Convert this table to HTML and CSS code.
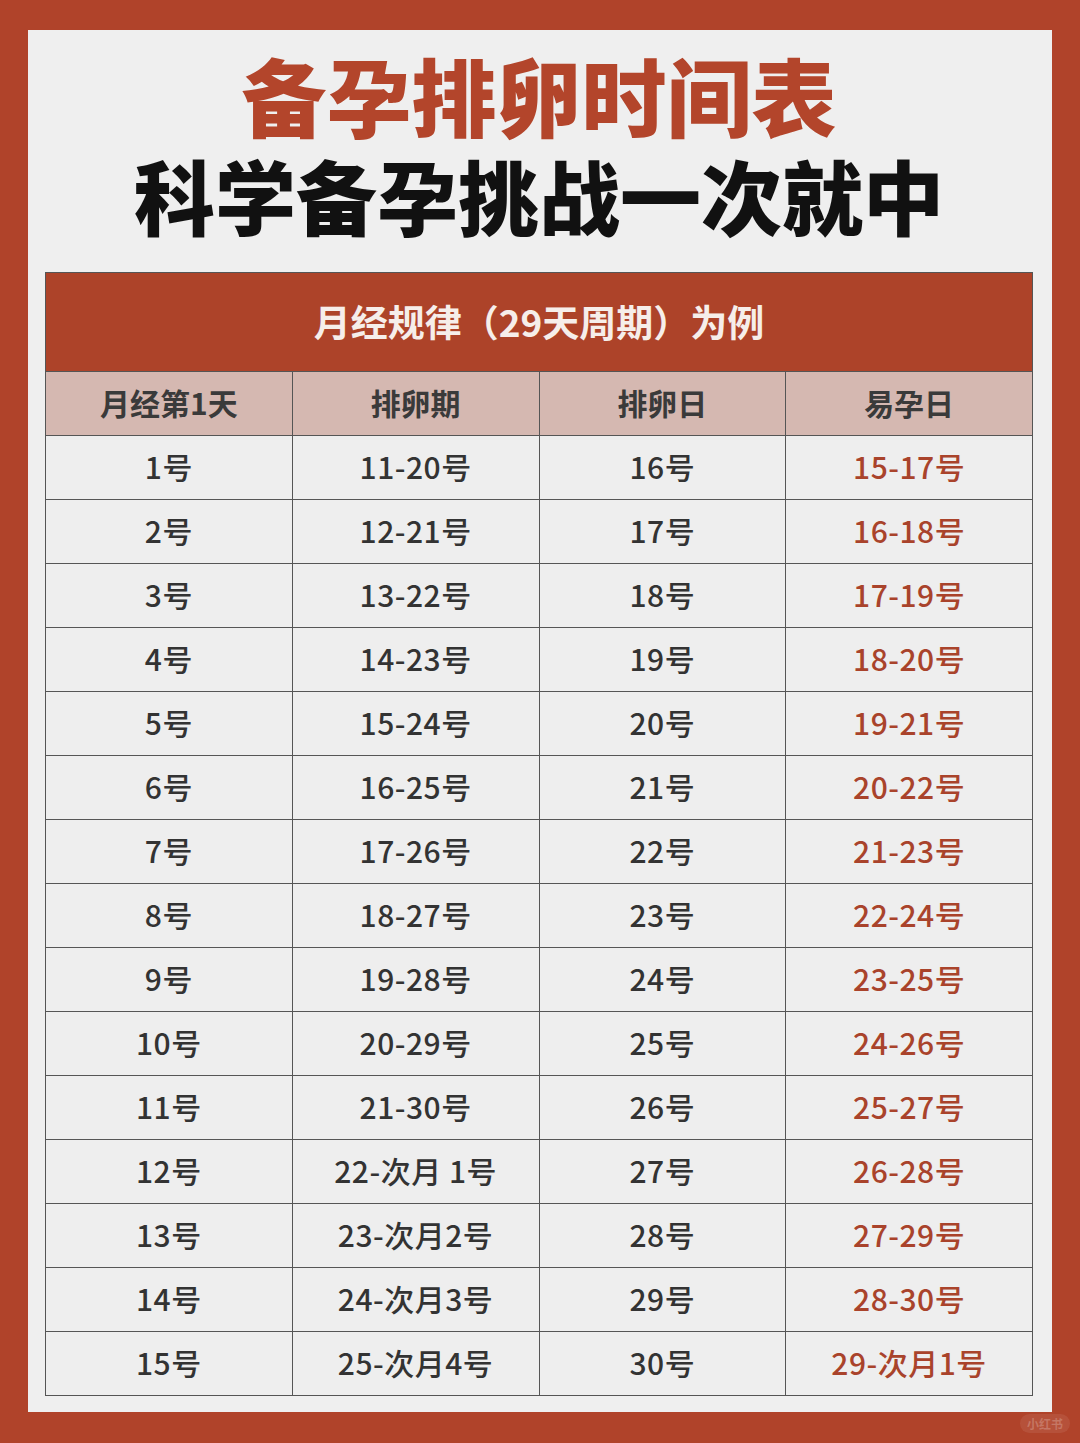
FILE: index.html
```html
<!DOCTYPE html>
<html lang="zh-CN">
<head>
<meta charset="utf-8">
<title>备孕排卵时间表</title>
<link rel="stylesheet" href="styles.css">
</head>
<body>
<div class="frame">
  <div class="panel">
    <h1 class="title-red">备孕排卵时间表</h1>
    <h2 class="title-black">科学备孕挑战一次就中</h2>
    <table class="schedule">
      <colgroup><col><col><col><col></colgroup>
      <thead>
        <tr class="caption-row"><th colspan="4">月经规律（29天周期）为例</th></tr>
        <tr class="head-row"><th>月经第1天</th><th>排卵期</th><th>排卵日</th><th>易孕日</th></tr>
      </thead>
      <tbody>
        <tr><td>1号</td><td>11-20号</td><td>16号</td><td class="hot">15-17号</td></tr>
        <tr><td>2号</td><td>12-21号</td><td>17号</td><td class="hot">16-18号</td></tr>
        <tr><td>3号</td><td>13-22号</td><td>18号</td><td class="hot">17-19号</td></tr>
        <tr><td>4号</td><td>14-23号</td><td>19号</td><td class="hot">18-20号</td></tr>
        <tr><td>5号</td><td>15-24号</td><td>20号</td><td class="hot">19-21号</td></tr>
        <tr><td>6号</td><td>16-25号</td><td>21号</td><td class="hot">20-22号</td></tr>
        <tr><td>7号</td><td>17-26号</td><td>22号</td><td class="hot">21-23号</td></tr>
        <tr><td>8号</td><td>18-27号</td><td>23号</td><td class="hot">22-24号</td></tr>
        <tr><td>9号</td><td>19-28号</td><td>24号</td><td class="hot">23-25号</td></tr>
        <tr><td>10号</td><td>20-29号</td><td>25号</td><td class="hot">24-26号</td></tr>
        <tr><td>11号</td><td>21-30号</td><td>26号</td><td class="hot">25-27号</td></tr>
        <tr><td>12号</td><td>22-次月 1号</td><td>27号</td><td class="hot">26-28号</td></tr>
        <tr><td>13号</td><td>23-次月2号</td><td>28号</td><td class="hot">27-29号</td></tr>
        <tr><td>14号</td><td>24-次月3号</td><td>29号</td><td class="hot">28-30号</td></tr>
        <tr><td>15号</td><td>25-次月4号</td><td>30号</td><td class="hot">29-次月1号</td></tr>
      </tbody>
    </table>
  </div>
  <span class="watermark">小红书</span>
</div>
</body>
</html>
```

FILE: styles.css
```css
* { box-sizing: border-box; }
html, body { margin: 0; padding: 0; }
body {
  background: #b0432a;
  font-family: "Noto Sans CJK SC", "Noto Sans", sans-serif;
}
.frame {
  position: relative;
  width: 1080px;
  height: 1443px;
  padding: 30px 28px 31px 28px;
}
.panel {
  width: 1024px;
  height: 1382px;
  background: #efefef;
  padding: 14px 19px 17px 17px;
  display: flex;
  flex-direction: column;
  align-items: center;
}
.title-red {
  margin: 0;
  font-size: 85px;
  font-weight: 900;
  line-height: 100px;
  color: #b3452b;
}
.title-black {
  margin: 0;
  font-size: 81px;
  font-weight: 900;
  line-height: 100px;
  color: #111111;
}
.schedule {
  margin-top: 28px;
  width: 988px;
  border-collapse: collapse;
  table-layout: fixed;
}
.schedule col { width: 25%; }
.schedule th, .schedule td {
  border: 1.5px solid #555555;
  text-align: center;
  padding: 0;
}
.caption-row th {
  height: 99px;
  background: #ad4329;
  color: #f6eeea;
  font-size: 37px;
  font-weight: 700;
  padding-bottom: 2px;
}
.head-row th {
  height: 64px;
  background: #d5b8b1;
  color: #3a3a3a;
  font-size: 30px;
  font-weight: 700;
  padding-bottom: 4px;
}
.schedule td {
  height: 64px;
  background: #eeeeee;
  color: #333333;
  font-size: 30px;
  font-weight: 500;
  letter-spacing: 0.5px;
  padding-bottom: 3px;
}
.schedule td.hot { color: #a9432b; }
.watermark {
  position: absolute;
  right: 10px;
  bottom: 10px;
  padding: 1px 7px;
  border-radius: 10px;
  background: rgba(255, 255, 255, 0.08);
  color: rgba(255, 255, 255, 0.22);
  font-size: 12px;
  font-weight: 700;
}
```
